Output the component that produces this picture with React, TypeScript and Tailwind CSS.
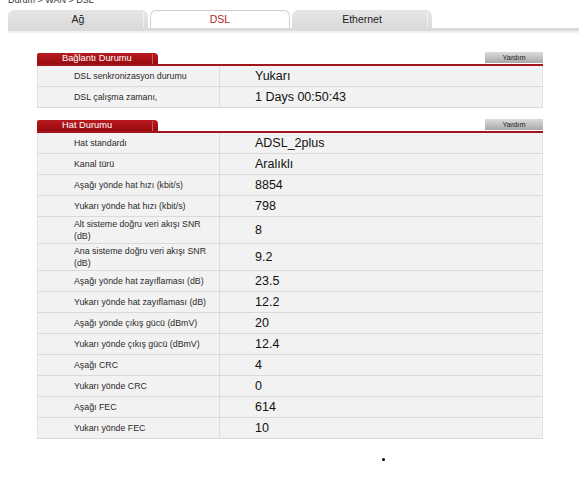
import React from "react";

type Row = { label: string; value: string; tall?: boolean };

const connRows: Row[] = [
  { label: "DSL senkronizasyon durumu", value: "Yukarı" },
  { label: "DSL çalışma zamanı,", value: "1 Days 00:50:43" },
];

const lineRows: Row[] = [
  { label: "Hat standardı", value: "ADSL_2plus" },
  { label: "Kanal türü", value: "Aralıklı" },
  { label: "Aşağı yönde hat hızı (kbit/s)", value: "8854" },
  { label: "Yukarı yönde hat hızı (kbit/s)", value: "798" },
  { label: "Alt sisteme doğru veri akışı SNR (dB)", value: "8", tall: true },
  { label: "Ana sisteme doğru veri akışı SNR (dB)", value: "9.2", tall: true },
  { label: "Aşağı yönde hat zayıflaması (dB)", value: "23.5" },
  { label: "Yukarı yönde hat zayıflaması (dB)", value: "12.2" },
  { label: "Aşağı yönde çıkış gücü (dBmV)", value: "20" },
  { label: "Yukarı yönde çıkış gücü (dBmV)", value: "12.4" },
  { label: "Aşağı CRC", value: "4" },
  { label: "Yukarı yönde CRC", value: "0" },
  { label: "Aşağı FEC", value: "614" },
  { label: "Yukarı yönde FEC", value: "10" },
];

function Tab({ label, active }: { label: string; active?: boolean }) {
  if (active) {
    return (
      <div className="w-[140px] h-[18px] pt-[1px] rounded-t-[6px] border border-b-0 border-[#cfcfcf] bg-white flex items-center justify-center text-[10.5px] text-[#b3262b]">
        {label}
      </div>
    );
  }
  return (
    <div className="relative w-[140px] h-[18px] pt-[1px] rounded-t-[6px] bg-gradient-to-b from-[#e6e6e6] to-[#dadada] flex items-center justify-center text-[10.5px] text-[#222]">
      {label}
      {/* highlight stripe on the right */}
      <span className="absolute right-[4px] top-[2px] bottom-0 w-[1px] bg-[#f2f2f2]" />
    </div>
  );
}

function SectionHeader({ title }: { title: string }) {
  return (
    <>
      <div className="flex justify-between items-start h-[12px]">
        <div className="relative mt-[1px] w-[121px] h-[11px] rounded-tl-[2px] rounded-tr-[4px] bg-gradient-to-b from-[#b71a1e] to-[#9a0b0f] text-white text-[9.3px] leading-[11px] pl-[25px]">
          {title}
          <span className="absolute right-[5px] top-[1px] bottom-0 w-[1px] bg-[#c65a5c]" />
        </div>
        <div className="w-[58px] h-[11px] bg-gradient-to-b from-[#dcdcdc] to-[#a9a9a9] text-[7.3px] leading-[11px] text-center text-[#222]">
          Yardım
        </div>
      </div>
      <div className="h-[2px] bg-[#a3151a]" />
    </>
  );
}

function InfoRow({ row }: { row: Row }) {
  return (
    <div className="flex border-b border-[#d9d9d9] bg-[#f2f2f2]">
      <div
        className={
          row.tall
            ? "w-[182px] shrink-0 border-r border-[#dcdcdc] pl-[36px] py-[1px] flex items-center"
            : "w-[182px] shrink-0 border-r border-[#dcdcdc] pl-[36px] min-h-[20px] flex items-center"
        }
      >
        <span className="block w-[140px] text-[8.8px] leading-[12px] text-[#2a2a2a]">{row.label}</span>
      </div>
      <div className="flex-1 pl-[35px] flex items-center text-[12.5px] text-[#111]">{row.value}</div>
    </div>
  );
}

export default function App() {
  return (
    <div className="min-h-[500px] bg-white font-['Liberation_Sans',Arial,sans-serif]">
      {/* Breadcrumb (cut at top) */}
      <div className="h-[3px] leading-[0px] pl-[8px] text-[9px] text-[#333] whitespace-nowrap">Durum &gt; WAN &gt; DSL</div>

      {/* Tabs */}
      <div className="mt-[7px] flex gap-[2px] pl-[8px]">
        <Tab label="Ağ" />
        <Tab label="DSL" active />
        <Tab label="Ethernet" />
      </div>
      <div className="ml-[8px] h-[3px] bg-[#dadada]" />
      <div className="ml-[8px] h-[2px] bg-[#f1f1f1]" />

      <div className="pl-[37px] w-[543px] mt-[19px]">
        {/* Bağlantı Durumu */}
        <SectionHeader title="Bağlantı Durumu" />
        <div className="border-l border-r border-[#e2e2e2]">
          {connRows.map((r) => (
            <InfoRow key={r.label} row={r} />
          ))}
        </div>

        {/* Hat Durumu */}
        <div className="mt-[11px]">
          <SectionHeader title="Hat Durumu" />
          <div className="border-l border-r border-[#e2e2e2]">
            {lineRows.map((r) => (
              <InfoRow key={r.label} row={r} />
            ))}
          </div>
        </div>
      </div>

      <div className="pl-[382px] pt-[19px]">
        <div className="w-[3px] h-[3px] rounded-full bg-black" />
      </div>
    </div>
  );
}
